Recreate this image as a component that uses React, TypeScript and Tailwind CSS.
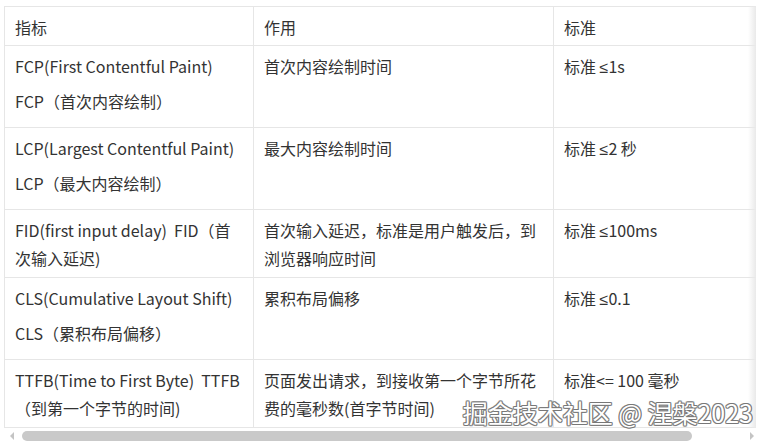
import React from "react";

const Le = () => <span style={{ fontFamily: '"Liberation Sans", sans-serif' }}>≤</span>;

const rows: { a: React.ReactNode; b: React.ReactNode; c: React.ReactNode }[] = [
  {
    a: (
      <>
        <p className="mb-[7px]">FCP(First Contentful Paint)</p>
        <p className="mb-[7px]">FCP（首次内容绘制）</p>
      </>
    ),
    b: "首次内容绘制时间",
    c: <>标准 <Le />1s</>,
  },
  {
    a: (
      <>
        <p className="mb-[7px]">LCP(Largest Contentful Paint)</p>
        <p className="mb-[7px]">LCP（最大内容绘制）</p>
      </>
    ),
    b: "最大内容绘制时间",
    c: <>标准 <Le />2 秒</>,
  },
  {
    a: (
      <>
        FID(first input delay)&nbsp;&nbsp;FID（首
        <br />
        次输入延迟)
      </>
    ),
    b: (
      <>
        首次输入延迟，标准是用户触发后，到
        <br />
        浏览器响应时间
      </>
    ),
    c: <>标准 <Le />100ms</>,
  },
  {
    a: (
      <>
        <p className="mb-[7px]">CLS(Cumulative Layout Shift)</p>
        <p className="mb-[7px]">CLS（累积布局偏移）</p>
      </>
    ),
    b: "累积布局偏移",
    c: <>标准 <Le />0.1</>,
  },
  {
    a: (
      <>
        TTFB(Time to First Byte)&nbsp;&nbsp;TTFB
        <br />
        （到第一个字节的时间)
      </>
    ),
    b: (
      <>
        页面发出请求，到接收第一个字节所花
        <br />
        费的毫秒数(首字节时间)
      </>
    ),
    c: "标准<= 100 毫秒",
  },
];

export default function App() {
  return (
    <div
      className="relative w-[767px] h-[446px] bg-white pl-[4px] pt-[6px] text-[#333] overflow-hidden"
      style={{ fontFamily: '"Noto Sans CJK SC", "Noto Sans", sans-serif' }}
    >
      <div className="relative w-[752px] overflow-hidden">
        <table className="w-[800px] table-fixed border-collapse text-[16px] leading-[28px]">
          <colgroup>
            <col className="w-[249px]" />
            <col className="w-[300px]" />
            <col className="w-[251px]" />
          </colgroup>
          <thead>
            <tr>
              <th className="border border-[#e6e6e6] pl-[10px] pt-[6px] pb-[4px] text-left font-normal whitespace-nowrap">指标</th>
              <th className="border border-[#e6e6e6] pl-[10px] pt-[6px] pb-[4px] text-left font-normal whitespace-nowrap">作用</th>
              <th className="border border-[#e6e6e6] pl-[10px] pt-[6px] pb-[4px] text-left font-normal whitespace-nowrap">标准</th>
            </tr>
          </thead>
          <tbody>
            {rows.map((r, i) => (
              <tr key={i}>
                <td className="border border-[#e6e6e6] pl-[10px] pt-[6px] pb-[5px] align-top whitespace-nowrap">{r.a}</td>
                <td className="border border-[#e6e6e6] pl-[10px] pt-[6px] pb-[5px] align-top whitespace-nowrap">{r.b}</td>
                <td className="border border-[#e6e6e6] pl-[10px] pt-[6px] pb-[5px] align-top whitespace-nowrap">{r.c}</td>
              </tr>
            ))}
          </tbody>
        </table>
        <div className="absolute right-0 top-0 bottom-0 w-[8px] bg-gradient-to-r from-transparent to-[#e9e9e9]" />
      </div>

      {/* horizontal scrollbar */}
      <div className="flex items-center w-[752px] h-[14px] mt-[1px]">
        <div className="w-[16px] flex justify-center">
          <div className="w-0 h-0 border-y-[4px] border-y-transparent border-r-[4px] border-r-[#c4c4c4]" />
        </div>
        <div className="ml-[2px] w-[670px] h-[10px] rounded-full bg-[#c9c9c9]" />
        <div className="flex-1 flex justify-end pr-[2px]">
          <div className="w-0 h-0 border-y-[4px] border-y-transparent border-l-[4px] border-l-[#c4c4c4]" />
        </div>
      </div>

      {/* watermark */}
      <div
        className="absolute right-[14px] top-[396px] text-[25px] leading-[32px] text-white whitespace-nowrap"
        style={{
          textShadow:
            "1px 0 0 #777, -1px 0 0 #777, 0 1px 0 #777, 0 -1px 0 #777, 1px 1px 0 #999, -1px -1px 0 #999, 1px -1px 0 #999, -1px 1px 0 #999",
        }}
      >
        掘金技术社区 @ 涅槃2023
      </div>
    </div>
  );
}
